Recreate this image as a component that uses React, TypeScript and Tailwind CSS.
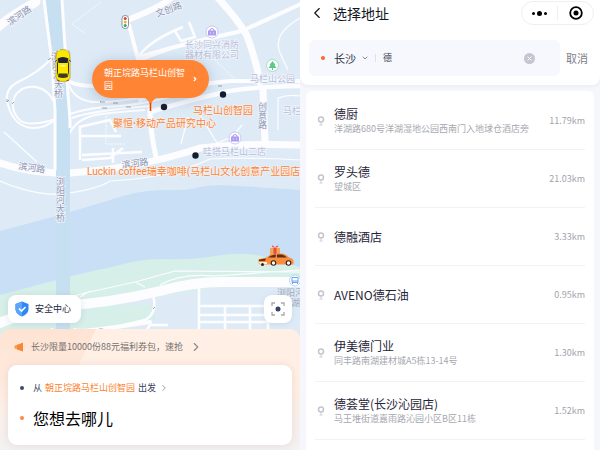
import React from 'react';
import { ChevronDown, ChevronLeft, ChevronRight, X } from 'lucide-react';

interface Place {
  name: string;
  address?: string;
  distance: string;
}

const places: Place[] = [
  { name: '德厨', address: '洋湖路680号洋湖湿地公园西南门入地球仓酒店旁', distance: '11.79km' },
  { name: '罗头德', address: '望城区', distance: '21.03km' },
  { name: '德融酒店', distance: '3.33km' },
  { name: 'AVENO德石油', distance: '0.95km' },
  { name: '伊美德门业', address: '同丰路南湖建材城A5栋13-14号', distance: '1.30km' },
  { name: '德荟堂(长沙沁园店)', address: '马王堆街道嘉雨路沁园小区B区11栋', distance: '1.52km' },
];

const YellowCar: React.FC = () => (
  <g>
    <rect x="55.500" y="49" width="15" height="33" rx="5" fill="#8a8a4a" opacity="0.35" />
    <path d="M57 52Q63 47 69 52L70 59V77Q69 81 63 81.500Q57 81 56 77V59Z" fill="#ffe600" stroke="#b7a708" strokeWidth="0.6" />
    <path d="M57.500 58.500Q63 55.500 68.500 58.500L67.500 63H58.500Z" fill="#20242c" />
    <path d="M57 60L58 63.500V72L57 76ZM69 60L68 63.500V72L69 76Z" fill="#33352c" />
    <path d="M58.500 73.500H67.500L68 77Q63 79 58 77Z" fill="#3b3b2b" />
    <rect x="60.500" y="65" width="5" height="1.500" fill="#fff8b0" />
    <path d="M55 61.500L57 60M71 61.500L69 60" stroke="#444" strokeWidth="1" />
    <path d="M58 50.500L60 49.500M68 50.500L66 49.500" stroke="#fff" strokeWidth="1" />
    <path d="M57 80L59.500 81M69 80L66.500 81" stroke="#c43a22" strokeWidth="1" />
  </g>
);

const GiftCar: React.FC = () => (
  <g>
    <path d="M270 248H280V255H270Z" fill="#f3a65a" />
    <path d="M273.500 248H276.500V255H273.500Z" fill="#e84a3b" />
    <path d="M275 248Q271 247 272 245.500Q274 245 275 248Q276 245 278 245.500Q279 247 275 248Z" fill="#f0604a" />
    <path d="M258.500 259.500Q263 258 266.500 257.500Q271 253.500 276 253.500H282Q286 254 289 257.500Q293 258 293.500 261V264.500H260Q258 263 258.500 259.500Z" fill="#fb8d3c" />
    <path d="M268 257.500Q272 254.500 276 254.500L275.500 257.500ZM277 254.500H281.500Q284.500 255 287 257.500H277Z" fill="#5b2f1c" />
    <path d="M259 259.500L266 258.500L265 261H259Z" fill="#6b3419" />
    <path d="M259 262H267V264H260Z" fill="#fff0df" />
    <circle cx="273.500" cy="263" r="2.800" fill="#3a2017" />
    <circle cx="273.500" cy="263" r="1.700" fill="#fff" />
    <circle cx="288.500" cy="263" r="2.800" fill="#3a2017" />
    <circle cx="288.500" cy="263" r="1.700" fill="#fff" />
    <circle cx="262.500" cy="264.500" r="1.500" fill="#3a2017" />
  </g>
);

const ShopPin: React.FC<{ x: number; y: number }> = ({ x, y }) => (
  <g transform={`translate(${x} ${y})`}>
    <circle r="6" fill="#fff" stroke="#cfc5f4" strokeWidth="1" />
    <path d="M-4 -1.500H4V3.500H-4Z" fill="#ab9cf0" />
    <path d="M-2 -1V-2Q0 -5 2 -2V-1" fill="none" stroke="#ab9cf0" strokeWidth="1.200" />
    <path d="M-1.500 0.500V1.500M1.500 0.500V1.500" stroke="#fff" strokeWidth="0.8" />
  </g>
);

const MapCanvas: React.FC = () => (
  <svg
    className="absolute inset-0 h-full w-full"
    viewBox="0 0 300 450"
    preserveAspectRatio="xMinYMin slice"
    role="img"
    aria-label="地图"
  >
    <rect width="300" height="450" fill="#deebf7" />

    {/* river and its south bank */}
    <path d="M0 231L60 215L110 200Q140 190 160 190Q185 191 200 187Q215 184 240 186L300 190V350H0Z" fill="#c8dff6" />
    <path d="M0 295L60 279Q90 271 108 268Q140 259 160 259Q190 260 215 256Q245 251 265 257Q285 262 300 267V300L0 335Z" fill="#d6efe8" />
    <path d="M0 325Q120 302 200 290Q250 284 300 286V450H0Z" fill="#deebf7" />
    <path d="M0 322L60 305H150L155 308V320L60 350H0Z" fill="#d6efe8" />

    {/* main roads */}
    <g fill="none" stroke="#fdfdff" strokeLinecap="round" strokeLinejoin="round">
      <path d="M-3 28Q10 16 36 2" strokeWidth="9" />
      <path d="M-3 162Q25 172 56 173H70Q140 168 200 148Q245 143 303 145" strokeWidth="7" />
      <path d="M130 19Q165 5 172 -3" strokeWidth="6" />
      <path d="M129 25L138 59M139 57Q190 42 242 31L303 3" strokeWidth="4" />
      <path d="M217 -3Q240 22 247 36Q256 60 260 82" strokeWidth="7" />
      <path d="M70 82Q78 86 95 86M140 100Q180 85 230 81L303 81" strokeWidth="4" />
      <path d="M150 112Q190 100 225 92Q245 87 303 86" strokeWidth="4.500" />
      <path d="M263 90L265 142" strokeWidth="7" />
      <path d="M150 110Q150 130 156 157" strokeWidth="5" />
      <path d="M-3 324Q20 314 60 306Q110 303 160 291Q195 281 230 282H303" strokeWidth="10" />
      <path d="M52 330L52 345M75 330Q80 333 150 322" strokeWidth="4" />
      <path d="M153 295Q158 313 145 320L98 331M146 331L150 325H167" strokeWidth="2.500" />
      <path d="M199 288V335M199 306H264M199 315H268M199 322H268M225 306V335M250 306V335M268 315V335" strokeWidth="2.500" />
    </g>

    {/* ramps and side streets */}
    <g fill="none" stroke="#fdfdff" strokeWidth="2">
      <path d="M52 58Q38 73 18 82Q3 90 8 105Q14 127 33 128Q46 128 56 119" />
      <path d="M55 105Q50 90 36 87Q20 85 14 98Q10 112 21 121Q30 127 56 119" />
      <path d="M69 85Q74 99 92 102Q118 103 160 94M70 114Q90 107 120 106Q145 104 190 92M68 137Q74 120 95 115Q115 112 145 110M72 118Q90 111 150 106" />
      <path d="M138 57Q150 40 183 27M175 31L181 41L195 37L189 22M138 61Q170 49 189 42" strokeWidth="2.500" />
      <path d="M80 127V160M79 127L110 120L116 132M80 136H121M82 155L142 152M82 160L110 158L123 148M113 148V163" strokeWidth="2.500" />
      <path d="M300 18Q272 34 280 53L288 70M188 117L181 144M200 115L217 143L232 137L242 125M278 130V98Q288 94 300 96" strokeWidth="1.200" />
      <path d="M4 132L37 162M0 181Q40 198 70 193Q100 188 110 181Q170 178 210 159Q250 157 300 160" strokeWidth="1.200" />
      <path d="M70 297L85 293L135 282L175 271L303 272M80 297L90 291M135 282L145 287M160 285Q180 273 215 276L300 270" strokeWidth="1.200" />
      <path d="M101 2L72 24L86 34M215 60L235 79M106 116V144H126" strokeWidth="0.8" strokeDasharray="2 1" />
    </g>

    {/* bridge, above the roads it crosses */}
    <path d="M46 0H61L70 120V345H56V110Z" fill="#c6dff1" />
    <path d="M44 0L52 62L55 110V170M62 0L68 95L70 120V128" fill="none" stroke="#fdfdff" strokeWidth="3" />

    <g fill="none" stroke="#7d8188" strokeWidth="0.7">
      <path d="M100 102H105M101 101L100 102M113 103H118M102 108H107M126 107H131M218 86H222M7 99V102L9 100M12 104L14 102M48 60L51 58M99 329H103M153 309L155 307" />
    </g>

    {/* street names */}
    <g
      fill="#8e93b2"
      stroke="#f4f7fd"
      strokeWidth="1.500"
      paintOrder="stroke"
      className="font-['Roboto','Noto_Sans_CJK_SC',sans-serif] text-[9px]"
    >
      <text x="10" y="26" transform="rotate(-35 10 26)">滨河路</text>
      <text x="157" y="17" transform="rotate(-20 157 17)">文创路</text>
      <text x="18" y="169" transform="rotate(8 18 169)">滨河路</text>
      <text x="122" y="168" transform="rotate(-7 122 168)">滨河路</text>
      <text x="51" y="60">浏</text>
      <text x="52" y="69">阳</text>
      <text x="53" y="78">河</text>
      <text x="54" y="88">大</text>
      <text x="54" y="97">桥</text>
      <text x="56" y="185">浏</text>
      <text x="56" y="194">阳</text>
      <text x="56" y="203">河</text>
      <text x="56" y="212">大</text>
      <text x="56" y="221">桥</text>
      <text x="258" y="110">创</text>
      <text x="258" y="119">意</text>
      <text x="258" y="128">路</text>
    </g>
    <g
      fill="#b9bdd9"
      stroke="#f1f6fc"
      strokeWidth="1.500"
      paintOrder="stroke"
      className="font-['Roboto','Noto_Sans_CJK_SC',sans-serif] text-[9px]"
    >
      <text x="185" y="48">长沙同兴消防</text>
      <text x="185" y="58">器材有限公司</text>
      <text x="250" y="82">马栏山公园</text>
      <text x="283" y="114">马栏</text>
      <text x="203" y="155">哇塔马栏山二店</text>
    </g>
    <g fill="#a3a8b8" className="font-['Roboto','Noto_Sans_CJK_SC',sans-serif] text-[9px]">
      <text x="277" y="296">浏阳河</text>
      <text x="291" y="306">湖</text>
    </g>

    <ShopPin x={212} y={32} />
    <ShopPin x={235} y={138} />
    <circle cx="272.500" cy="65.500" r="6" fill="#fff" stroke="#a6dfc0" strokeWidth="1" />
    <path d="M272.500 61L275.500 65H274.500L276.500 68H273V70H272V68H268.500L270.500 65H269.500Z" fill="#5cc98b" />
    <circle cx="295" cy="280.500" r="5.500" fill="#fff" stroke="#a9cbfa" strokeWidth="0.8" />
    <path d="M292 277.500H298V282.500H292ZM292.500 282.500V284M297.500 282.500V284M292 281H298" fill="none" stroke="#6ba4f5" strokeWidth="1" />

    <rect x="122" y="15.500" width="6.500" height="13" rx="3" fill="#fff" stroke="#777" strokeWidth="0.8" />
    <circle cx="125.200" cy="18.500" r="1.500" fill="#d9413f" />
    <circle cx="125.200" cy="22" r="1.500" fill="#f0b43a" />
    <circle cx="125.200" cy="25.500" r="1.500" fill="#2aa86b" />

    {/* recommended pick-up spots */}
    <g fill="#151c2e">
      <circle cx="164" cy="107" r="3.200" />
      <circle cx="223" cy="94.500" r="3.200" />
      <circle cx="195.500" cy="155.500" r="3.200" />
    </g>
    <g
      fill="#f58440"
      stroke="#fff3ea"
      strokeWidth="1"
      paintOrder="stroke"
      className="font-['Roboto','Noto_Sans_CJK_SC',sans-serif] text-[10px]"
    >
      <text x="193" y="114">马栏山创智园</text>
      <text x="113" y="127">
        聚恒<tspan className="font-bold">·</tspan>移动产品研究中心
      </text>
      <text x="87" y="175">Luckin coffee瑞幸咖啡(马栏山文化创意产业园店</text>
    </g>

    <YellowCar />
    <GiftCar />
  </svg>
);

const PickupCallout: React.FC = () => (
  <button
    type="button"
    className="absolute left-[92px] top-[60px] flex h-[38px] w-[117px] items-center justify-between rounded-full bg-[#ff8534] pl-3 pr-[11px] text-left text-[9px] leading-[13px] text-white shadow-[0_2px_14px_rgba(70,90,130,0.3)]"
  >
    <span className="w-[82px]">朝正垸路马栏山创智园</span>
    <ChevronRight className="h-1.5 w-1.5" strokeWidth={5} />
    <svg className="absolute left-[50px] top-[37px] h-4 w-4" viewBox="0 0 16 16" aria-hidden="true">
      <path d="M1 0H16Q10 3 9.500 7V14H7.500V7Q7 3 1 0Z" fill="#ff8534" />
      <path d="M8.500 6V14" stroke="#d9460f" strokeWidth="1" />
    </svg>
  </button>
);

const HomeScreen: React.FC = () => (
  <section className="relative flex min-w-0 flex-col justify-end overflow-hidden">
    <MapCanvas />
    <PickupCallout />

    <div className="relative mb-1.5 flex items-center justify-between px-2">
      <button
        type="button"
        className="flex h-7 items-center gap-1.5 rounded-lg bg-white pl-[7px] pr-2.5 text-[9px] text-[#23283a] shadow-[0_1px_6px_rgba(80,100,140,0.15)]"
      >
        <svg className="h-4 w-3.5" viewBox="0 0 14 16" aria-hidden="true">
          <path d="M7 0.500L13.500 3V8.500Q13 13 7 15.500Q1 13 0.500 8.500V3Z" fill="#3186f7" />
          <path d="M7 0.500V15.500Q1 13 0.500 8.500V3Z" fill="#5aa5fb" />
          <path d="M4 7.500L6.500 10L10.500 6" fill="none" stroke="#fff" strokeWidth="1.600" />
        </svg>
        安全中心
      </button>
      <button
        type="button"
        aria-label="定位"
        className="flex h-7 w-7 items-center justify-center rounded-lg bg-white shadow-[0_1px_6px_rgba(80,100,140,0.15)]"
      >
        <svg className="h-3.5 w-3.5" viewBox="0 0 14 14" aria-hidden="true">
          <path d="M1 4V1H4M10 1H13V4M13 10V13H10M4 13H1V10" fill="none" stroke="#a5a8b0" strokeWidth="1.300" />
          <circle cx="7" cy="7" r="2.500" fill="#35426e" />
        </svg>
      </button>
    </div>

    <div className="relative overflow-hidden rounded-t-[10px] bg-linear-to-b from-[#ffefe5] from-50% to-[#f4f2f3] px-2 pb-[5px]">
      <div className="absolute left-0 top-0 h-20 w-24 bg-linear-to-b from-[#fee3d3] to-transparent [clip-path:polygon(0_0,100%_0,60%_100%,0_100%)]" />
      <button type="button" className="relative flex h-9 w-full items-center pl-1.5 text-[9px] text-[#75716f]">
        <svg className="mr-[7px] h-[10px] w-[10px]" viewBox="0 0 10 10" aria-hidden="true">
          <path d="M0.500 3.500L4 2.500V7.500L0.500 6.500Z" fill="#f8a04e" />
          <path d="M3 3L9 0.500V9.500L3 7.500Z" fill="#f98636" />
        </svg>
        长沙限量10000份88元福利券包，速抢
        <ChevronRight className="ml-1.5 h-3.5 w-3.5 text-[#8f8a88]" strokeWidth={2} />
      </button>
      <div className="relative flex h-20 flex-col rounded-[9px] bg-white px-3 pt-[13px] shadow-[0_1px_10px_rgba(120,80,60,0.13)]">
        <button type="button" className="flex h-5 items-center text-[9px] text-[#3a4160]">
          <span className="mr-[9px] h-1 w-1 rounded-full bg-[#3e4872]" />
          从<span className="mx-[3px] text-[#fb7f2e]">朝正垸路马栏山创智园</span>出发
          <ChevronRight className="ml-[3px] h-2.5 w-2.5 text-[#888d9f]" strokeWidth={2} />
        </button>
        <button type="button" className="mt-2 flex h-6 items-center text-[16px] text-black">
          <span className="mr-[9px] h-1 w-1 rounded-full bg-[#ff8a45]" />
          您想去哪儿
        </button>
      </div>
    </div>
  </section>
);

const PlaceRow: React.FC<{ place: Place }> = ({ place }) => (
  <li>
    <button type="button" className="flex h-[58px] w-full items-center border-b border-[#f1f2f5] text-left">
      <svg className="mx-0.5 h-[10px] w-2 flex-shrink-0" viewBox="0 0 8 10" aria-hidden="true">
        <circle cx="4" cy="3.500" r="2.500" fill="none" stroke="#c3c6ce" strokeWidth="1.500" />
        <path d="M4 6V8.500M2.500 9H5.500" stroke="#c9ccd3" strokeWidth="1" />
      </svg>
      <span className="ml-[7px] flex min-w-0 flex-1 flex-col">
        <span className="text-[12px] leading-[17px] text-[#1f2437]">{place.name}</span>
        {place.address && (
          <span className="truncate text-[9px] leading-[14px] text-[#a6a8af]">{place.address}</span>
        )}
      </span>
      <span className="ml-2 text-[9px] text-[#a0a3ab]">{place.distance}</span>
    </button>
  </li>
);

const SearchScreen: React.FC = () => (
  <section className="flex min-w-0 flex-col overflow-hidden bg-[#f6f7fc]">
    <header className="rounded-b-lg bg-white pb-[9px] shadow-[0_1px_4px_rgba(60,70,110,0.08)]">
      <div className="flex h-7 items-center pb-0.5 pl-2 pr-1.5">
        <button type="button" aria-label="返回" className="flex w-[25px]">
          <ChevronLeft className="h-[18px] w-[18px] text-[#111]" strokeWidth={1.5} />
        </button>
        <h1 className="flex-1 text-[14px] leading-5 text-[#15171e]">选择地址</h1>
        <div className="flex h-6 w-[73px] items-center rounded-full border border-[#eeeff2]">
          <button type="button" aria-label="更多" className="flex flex-1 items-center justify-center gap-0.5">
            <span className="h-[3px] w-[3px] rounded-full bg-black" />
            <span className="h-[5px] w-[5px] rounded-full bg-black" />
            <span className="h-[3px] w-[3px] rounded-full bg-black" />
          </button>
          <span className="h-3.5 w-px bg-[#eeeff2]" />
          <button type="button" aria-label="关闭" className="flex flex-1 justify-center">
            <svg className="h-3.5 w-3.5" viewBox="0 0 14 14" aria-hidden="true">
              <circle cx="7" cy="7" r="5.800" fill="none" stroke="#000" strokeWidth="1.800" />
              <circle cx="7" cy="7" r="2.500" />
            </svg>
          </button>
        </div>
      </div>

      <form className="mt-3 flex items-center pl-[9px] pr-3">
        <div className="flex h-9 min-w-0 flex-1 items-center rounded-md bg-[#f6f8fd] pl-3 pr-[25px]">
          <span className="mr-[9px] h-1 w-1 flex-shrink-0 rounded-full bg-[#ff6526]" />
          <label className="flex items-center">
            <select aria-label="城市" className="w-[25px] appearance-none bg-transparent text-[11px] text-[#2a2e3d] outline-none">
              <option>长沙</option>
            </select>
            <ChevronDown className="ml-0.5 h-2 w-2 text-[#6b6f7e]" strokeWidth={2.5} />
          </label>
          <span className="ml-1.5 h-2 w-px bg-[#dfe1e8]" />
          <input
            type="text"
            aria-label="搜索地址"
            defaultValue="德"
            className="ml-[7px] min-w-0 flex-1 bg-transparent text-[9px] text-[#3a3e4c] outline-none"
          />
          <button
            type="button"
            aria-label="清空"
            className="flex h-[11px] w-[11px] items-center justify-center rounded-full bg-[#c3c6d0]"
          >
            <X className="h-[7px] w-[7px] text-white" strokeWidth={3} />
          </button>
        </div>
        <button type="button" className="ml-1.5 text-[11px] text-[#7b7e89]">
          取消
        </button>
      </form>
    </header>

    <ul className="mx-1.5 mt-1.5 flex-1 rounded-t-md bg-white px-[9px] pt-px">
      {places.map((place) => (
        <PlaceRow key={place.name} place={place} />
      ))}
    </ul>
  </section>
);

const App: React.FC = () => (
  <main className="grid h-screen grid-cols-2 overflow-hidden bg-white font-['Noto_Sans_CJK_SC',sans-serif]">
    <HomeScreen />
    <SearchScreen />
  </main>
);

export default App;
